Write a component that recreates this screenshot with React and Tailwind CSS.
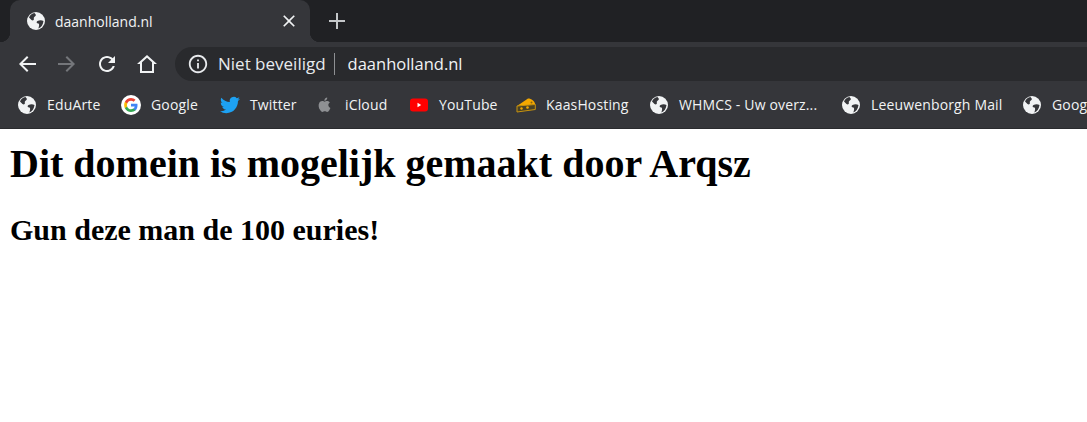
const Icon = ({ d, className }) => (
  <svg viewBox="0 0 24 24" className={className} fill="currentColor" fillRule="evenodd">
    <path d={d} />
  </svg>
);

const closePath = 'M19 6.410L17.590 5 12 10.590 6.410 5 5 6.410 10.590 12 5 17.590 6.410 19 12 13.410 17.590 19 19 17.590 13.410 12z';
const plusPath = 'M20 13h-7v7h-2v-7H4v-2h7V4h2v7h7v2z';
const backPath = 'M21 11H7.830l5.590-5.590L12 4l-8 8 8 8 1.410-1.410L7.830 13H21v-2z';
const forwardPath = 'M3 11h13.170l-5.590-5.590L12 4l8 8-8 8-1.410-1.410L16.170 13H3v-2z';
const reloadPath = 'M17.650 6.350C16.200 4.900 14.210 4 12 4c-4.420 0-7.990 3.580-7.990 8s3.570 8 7.990 8c3.730 0 6.840-2.550 7.730-6h-2.080c-.82 2.330-3.040 4-5.650 4-3.310 0-6-2.690-6-6s2.690-6 6-6c1.660 0 3.140.69 4.220 1.780L13 11h7V4l-2.350 2.350z';
const homePath = 'M12 3L2 12h3v9h14v-9h3L12 3zm5 16H7v-8.810l5-4.500 5 4.500V19z';
const infoPath = 'M11 7h2v2h-2zm0 4h2v6h-2zm1-9C6.480 2 2 6.480 2 12s4.480 10 10 10 10-4.480 10-10S17.520 2 12 2zm0 18c-4.410 0-8-3.590-8-8s3.590-8 8-8 8 3.590 8 8-3.590 8-8 8z';

const Globe = () => (
  <svg viewBox="0 0 20 20" className="w-5 h-5 shrink-0">
    <circle cx="10" cy="10" r="9" fill="#f1f3f4" />
    <path d="M8.500 2 C6 2.500 4 4 3 6.500 L5.500 9 C6.800 10 8.200 9 7.800 7.700 C7.400 6 9.500 5.500 10 4 Z" fill="#35363a" />
    <path d="M17.500 10 C15.500 8.800 13.500 9 11.500 10 C10 11 10.500 12.500 12.500 12.500 C13.500 13 13.200 15 12.300 17.500 C15 16.800 17 14 17.500 10 Z" fill="#35363a" />
  </svg>
);

const GoogleIcon = () => (
  <svg viewBox="0 0 20 20" className="w-5 h-5 shrink-0">
    <circle cx="10" cy="10" r="10" fill="#ffffff" />
    <path d="M16.500 10.200c0-.6 0-1-.1-1.500H10v2.800h3.700c-.2.900-.7 1.600-1.400 2.200v1.800h2.200c1.300-1.200 2-3 2-5.300z" fill="#4285f4" />
    <path d="M10 17c1.900 0 3.400-.6 4.500-1.700l-2.200-1.700c-.6.400-1.400.7-2.300.7-1.800 0-3.300-1.200-3.800-2.900H3.900v1.800C5 15.600 7.300 17 10 17z" fill="#34a853" />
    <path d="M6.200 11.400c-.3-.9-.3-1.900 0-2.800V6.800H3.900c-1 2-1 4.400 0 6.400z" fill="#fbbc05" />
    <path d="M10 5.700c1 0 1.900.4 2.600 1l1.900-1.900C13.300 3.700 11.800 3 10 3 7.300 3 5 4.400 3.900 6.800l2.300 1.800C6.700 6.900 8.200 5.700 10 5.700z" fill="#ea4335" />
  </svg>
);

const TwitterIcon = () => (
  <svg viewBox="0 0 24 24" className="w-5 h-5 shrink-0" fill="#1da1f2">
    <path d="M23.950 4.570a10 10 0 0 1-2.820.770 4.960 4.960 0 0 0 2.160-2.720c-.95.550-2 .950-3.130 1.180a4.920 4.920 0 0 0-8.380 4.480C7.690 8.100 4.070 6.130 1.640 3.160a4.820 4.820 0 0 0-.67 2.480c0 1.710.87 3.210 2.190 4.100a4.900 4.900 0 0 1-2.230-.62v.06a4.920 4.920 0 0 0 3.950 4.830 5 5 0 0 1-2.210.08 4.940 4.940 0 0 0 4.600 3.420A9.870 9.870 0 0 1 0 19.540a14 14 0 0 0 7.560 2.210c9.050 0 14-7.500 14-13.980 0-.21 0-.42-.02-.63a9.940 9.940 0 0 0 2.460-2.550z" />
  </svg>
);

const AppleIcon = () => (
  <svg viewBox="2 2 17 17" className="w-5 h-5 shrink-0" fill="#8e9093">
    <path d="M13.300 10.600c0-1.500 1.200-2.200 1.300-2.300-.7-1-1.800-1.200-2.200-1.200-.9-.1-1.800.6-2.300.6s-1.200-.6-2-.5c-1 0-2 .6-2.500 1.500-1.100 1.900-.3 4.600.8 6.100.5.800 1.100 1.600 1.900 1.600s1.100-.5 2-.5 1.200.5 2 .5 1.400-.8 1.900-1.500c.6-.9.800-1.700.9-1.800-.1 0-1.800-.7-1.800-2.500z" />
    <path d="M11.800 6c.4-.5.700-1.200.6-1.900-.6 0-1.300.4-1.800.9-.4.400-.7 1.100-.6 1.800.7.100 1.400-.3 1.800-.8z" />
  </svg>
);

const YouTubeIcon = () => (
  <svg viewBox="0 0 20 20" className="w-5 h-5 shrink-0">
    <rect x="1" y="3.500" width="18" height="13" rx="3" fill="#ff0000" />
    <path d="M8.500 7.800v4.400l3.700-2.200z" fill="#ffffff" />
  </svg>
);

const CheeseIcon = () => (
  <svg viewBox="0 0 20 20" className="w-5 h-5 shrink-0">
    <path d="M1 11 L12 3.500 C15.500 3.500 18.500 6 19.300 9.500 Z" fill="#f4a800" />
    <path d="M1 11 L19.300 9.500 L19.300 14.500 L1 17 Z" fill="#4a4224" stroke="#c8930f" strokeWidth="1" strokeLinejoin="round" />
    <circle cx="5.500" cy="13.500" r="1.200" fill="#f4a800" />
    <circle cx="11.500" cy="12.500" r="1.300" fill="#f4a800" />
    <circle cx="15.500" cy="7.500" r="1" fill="#8a6510" />
  </svg>
);

const bookmarks = [
  { icon: <Globe />, label: 'EduArte', width: 'w-[54px]' },
  { icon: <GoogleIcon />, label: 'Google', width: 'w-[49px]' },
  { icon: <TwitterIcon />, label: 'Twitter', width: 'w-[45px]' },
  { icon: <AppleIcon />, label: 'iCloud', width: 'w-[44px]' },
  { icon: <YouTubeIcon />, label: 'YouTube', width: 'w-[57px]' },
  { icon: <CheeseIcon />, label: 'KaasHosting', width: 'w-[83px]' },
  { icon: <Globe />, label: 'WHMCS - Uw overz...', width: 'w-[142px]' },
  { icon: <Globe />, label: 'Leeuwenborgh Mail', width: 'w-[131px]' },
  { icon: <Globe />, label: 'Google', width: 'w-[49px]' },
];

const App = () => {
  return (
    <div className="h-[422px] w-[1087px] overflow-hidden bg-white font-['Open_Sans',sans-serif]">
      {/* Tab strip */}
      <div className="flex h-[42px] items-end bg-[#202124] pl-[10px]">
        <div className="relative flex h-[42px] w-[300px] items-center rounded-t-[10px] bg-[#35363a] pl-[16px] pr-[11px]">
          <span className="absolute -left-[10px] bottom-0 h-[10px] w-[10px] bg-[radial-gradient(circle_at_0_0,#202124_10px,#35363a_10.5px)]" />
          <span className="absolute -right-[10px] bottom-0 h-[10px] w-[10px] bg-[radial-gradient(circle_at_100%_0,#202124_10px,#35363a_10.5px)]" />
          <Globe />
          <span className="ml-[9px] flex-1 text-[14px] text-[#f1f3f4]">daanholland.nl</span>
          <Icon d={closePath} className="h-[20px] w-[20px] text-[#f1f3f4]" />
        </div>
        <div className="flex h-[42px] items-center pl-[15px]">
          <Icon d={plusPath} className="h-[24px] w-[24px] text-[#c4c7c9]" />
        </div>
      </div>

      {/* Toolbar */}
      <div className="flex h-[42px] items-center bg-[#35363a] pl-[15px] pt-[2px]">
        <Icon d={backPath} className="h-[24px] w-[24px] text-[#f1f3f4]" />
        <Icon d={forwardPath} className="ml-[16px] h-[24px] w-[24px] text-[#74767a]" />
        <Icon d={reloadPath} className="ml-[16px] h-[24px] w-[24px] text-[#f1f3f4]" />
        <Icon d={homePath} className="ml-[16px] h-[24px] w-[24px] text-[#f1f3f4]" />
        <div className="ml-[16px] flex h-[34px] flex-1 items-center rounded-l-full bg-[#292a2d] pl-[12px]">
          <Icon d={infoPath} className="h-[22px] w-[22px] text-[#e8eaed]" />
          <span className="ml-[9px] text-[17px] text-[#e8eaed]">Niet beveiligd</span>
          <span className="ml-[8px] h-[22px] w-px bg-[#8e9093]" />
          <span className="ml-[13px] text-[16.500px] text-[#f1f3f4]">daanholland.nl</span>
        </div>
      </div>

      {/* Bookmarks bar */}
      <div className="flex h-[45px] items-center gap-5 overflow-hidden border-b border-[#2a2b2e] bg-[#35363a] pb-[3px] pl-[17px]">
        {bookmarks.map((bookmark, i) => (
          <div key={i} className="flex shrink-0 items-center gap-[10px]">
            {bookmark.icon}
            <span className={`${bookmark.width} whitespace-nowrap text-[14px] tracking-[0.15px] text-[#f1f3f4]`}>
              {bookmark.label}
            </span>
          </div>
        ))}
      </div>

      {/* Page */}
      <div className="px-[10px] font-['Liberation_Serif',serif] text-black">
        <h1 className="mt-[12px] text-[40px] font-bold leading-[46px]">Dit domein is mogelijk gemaakt door Arqsz</h1>
        <h2 className="mt-[26px] text-[30px] font-bold leading-[34px]">Gun deze man de 100 euries!</h2>
      </div>
    </div>
  );
};

export default App;
